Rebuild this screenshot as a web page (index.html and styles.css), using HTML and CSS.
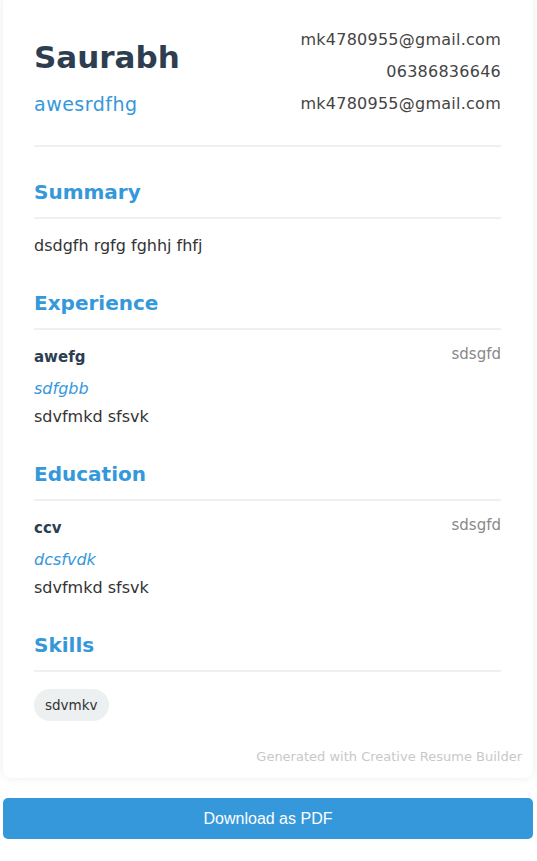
FILE: index.html
```html
<!DOCTYPE html>
<html>
<head>
<meta charset="utf-8">
<link rel="stylesheet" href="styles.css">
</head>
<body>
<div class="page">
  <div class="card">
    <header class="head">
      <div class="ident">
        <h1 class="name">Saurabh</h1>
        <div class="role">awesrdfhg</div>
      </div>
      <div class="contact">
        <div>mk4780955@gmail.com</div>
        <div>06386836646</div>
        <div>mk4780955@gmail.com</div>
      </div>
    </header>

    <section class="sec">
      <h2 class="sec-title">Summary</h2>
      <p class="text">dsdgfh rgfg fghhj fhfj</p>
    </section>

    <section class="sec">
      <h2 class="sec-title">Experience</h2>
      <div class="item">
        <div class="item-top">
          <span class="item-title">awefg</span>
          <span class="item-date">sdsgfd</span>
        </div>
        <div class="item-sub">sdfgbb</div>
        <div class="text">sdvfmkd sfsvk</div>
      </div>
    </section>

    <section class="sec">
      <h2 class="sec-title">Education</h2>
      <div class="item">
        <div class="item-top">
          <span class="item-title">ccv</span>
          <span class="item-date">sdsgfd</span>
        </div>
        <div class="item-sub">dcsfvdk</div>
        <div class="text">sdvfmkd sfsvk</div>
      </div>
    </section>

    <section class="sec">
      <h2 class="sec-title">Skills</h2>
      <div class="skills">
        <span class="pill">sdvmkv</span>
      </div>
    </section>

    <footer class="foot">Generated with Creative Resume Builder</footer>
  </div>
  <button class="dl">Download as PDF</button>
</div>
</body>
</html>
```
FILE: styles.css
```css
html, body {
  margin: 0;
  padding: 0;
  background: #ffffff;
}
body {
  font-family: "DejaVu Sans", "Open Sans", sans-serif;
  color: #333;
}
.page {
  padding: 0 4px 0 3px;
  display: flex;
  flex-direction: column;
}
.card {
  margin-top: -6px;
  background: #fff;
  border-radius: 8px;
  box-shadow: 0 0 10px rgba(0, 0, 0, 0.08);
  padding: 30px 32px 11px 31px;
}
.head {
  display: flex;
  justify-content: space-between;
  align-items: flex-end;
  padding-bottom: 25px;
  border-bottom: 2px solid #eef1f3;
}
.name {
  margin: 0 0 11px;
  font-size: 31px;
  line-height: 40px;
  font-weight: 700;
  color: #2c3e50;
}
.role {
  font-size: 19px;
  letter-spacing: 0.5px;
  line-height: 32px;
  color: #3498db;
}
.contact {
  text-align: right;
  font-size: 16px;
  letter-spacing: 0.25px;
  line-height: 32px;
  color: #444;
}
.sec {
  margin-top: 30px;
}
.sec-title {
  margin: 0;
  font-size: 20px;
  line-height: 30px;
  font-weight: 700;
  color: #3498db;
  padding-bottom: 10px;
  border-bottom: 2px solid #eef1f3;
}
.text {
  margin: 0;
  font-size: 16px;
  line-height: 24px;
  color: #333;
}
.sec > .text {
  margin-top: 15px;
}
.item {
  margin-top: 15px;
}
.item-top {
  display: flex;
  justify-content: space-between;
  align-items: center;
}
.item-title {
  font-size: 15px;
  line-height: 24px;
  font-weight: 700;
  color: #2c3e50;
}
.item-date {
  font-size: 15px;
  color: #888;
  line-height: 20px;
  margin-top: -6px;
}
.item-sub {
  margin-top: 8px;
  margin-bottom: 4px;
  font-size: 16px;
  line-height: 24px;
  font-style: italic;
  color: #3498db;
}
.skills {
  margin-top: 17px;
  display: flex;
  flex-wrap: wrap;
  gap: 8px;
}
.pill {
  background: #ecf0f1;
  border-radius: 16px;
  padding: 0 11px;
  height: 32px;
  line-height: 32px;
  font-size: 13.5px;
  color: #333;
}
.foot {
  margin-top: 26px;
  margin-right: -21px;
  text-align: right;
  font-size: 13px;
  line-height: 20px;
  color: #c8c8c8;
}
.dl {
  margin-top: 20px;
  height: 41px;
  border: none;
  border-radius: 5px;
  background: #3498db;
  color: #fff;
  font-family: "Liberation Sans", Arial, sans-serif;
  font-size: 16px;
}
```
